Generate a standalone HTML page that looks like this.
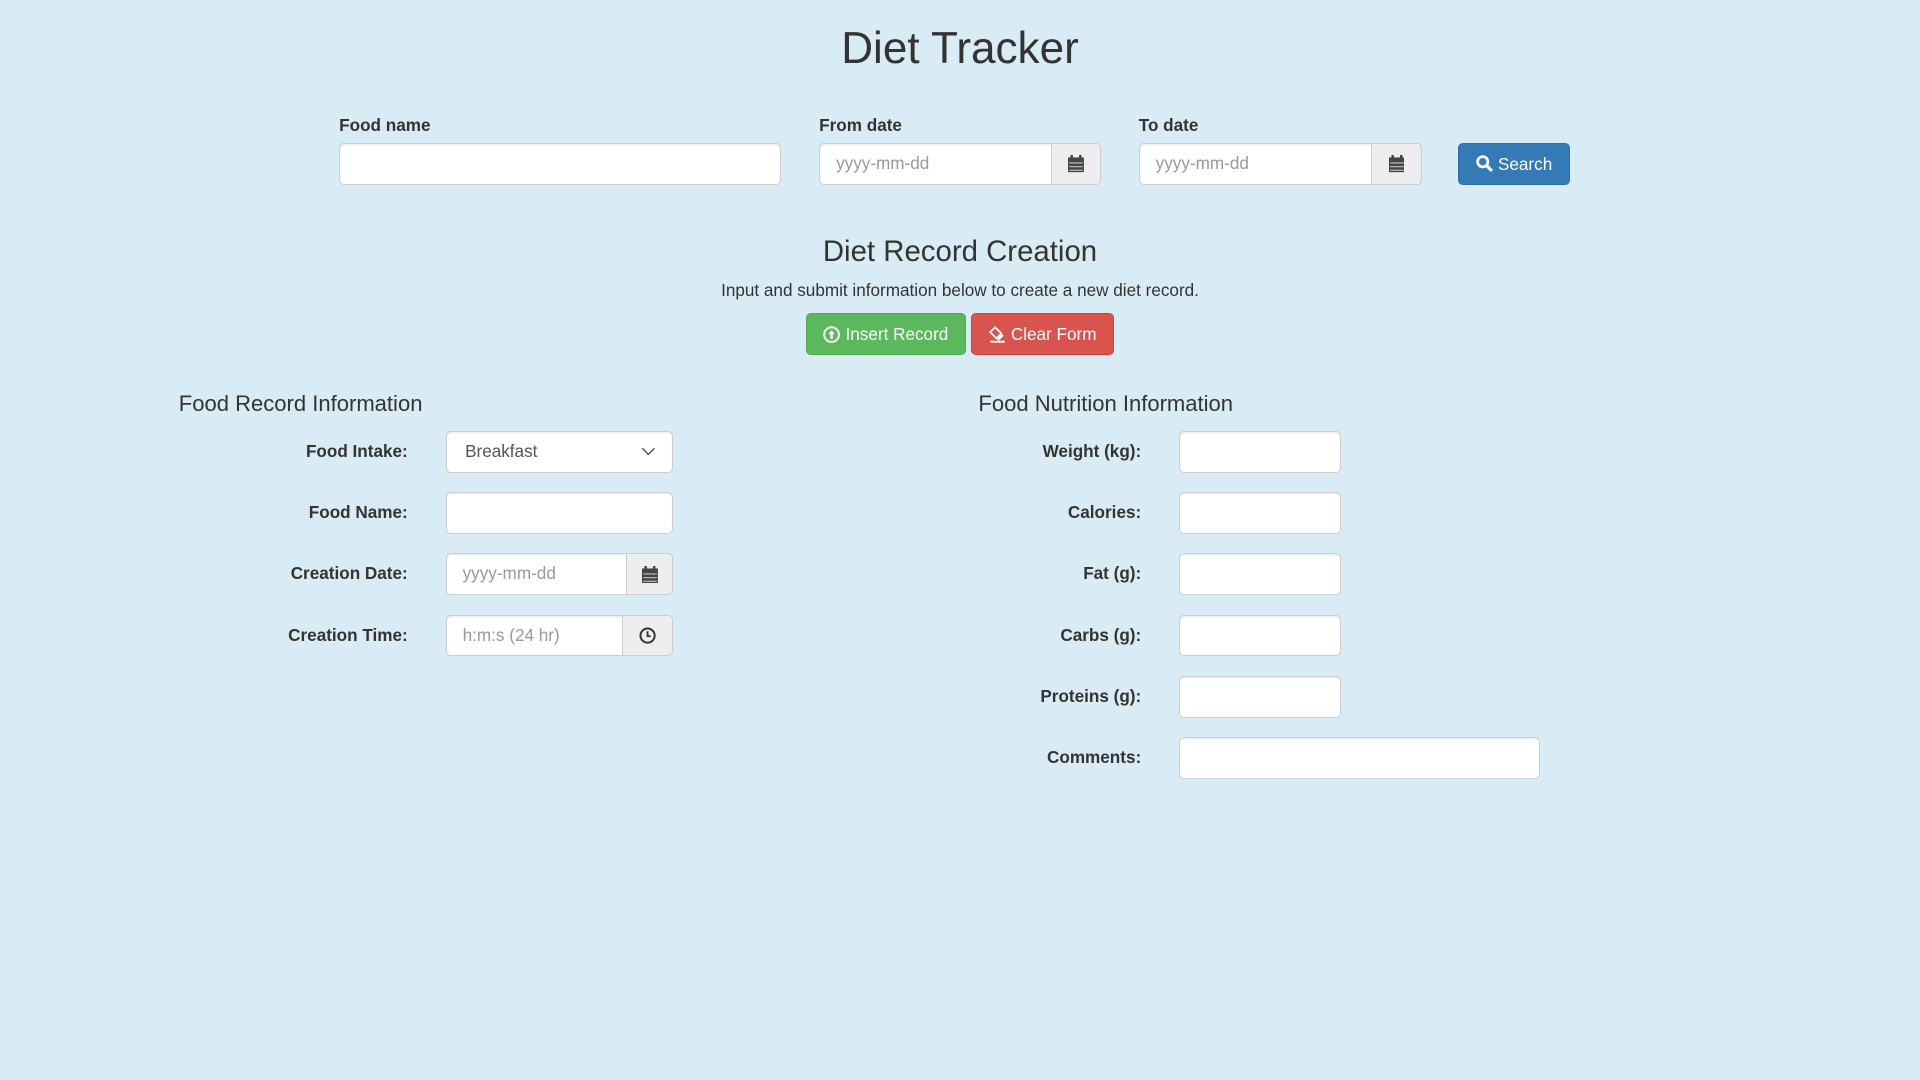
<!DOCTYPE html>
<html><head><meta charset="utf-8">
<style>
html,body{margin:0;padding:0;background:#d9ecf5;}
body{width:1568px;height:882px;zoom:1.22449;position:relative;overflow:hidden;font-family:"Liberation Sans",Arial,sans-serif;color:#333;font-size:14px;}
.a{position:absolute;}
.lbl{font-weight:bold;font-size:14px;}
.inp{position:absolute;box-sizing:border-box;height:34px;background:#fff;border:1px solid #ccc;border-radius:4px;box-shadow:inset 0 1px 1px rgba(0,0,0,.075);color:#999;font-size:14px;line-height:32px;padding-left:13px;}
.addon{position:absolute;box-sizing:border-box;height:34px;background:#eee;border:1px solid #ccc;border-radius:0 4px 4px 0;display:flex;align-items:center;justify-content:center;}
.grp{border-radius:4px 0 0 4px;border-right:none;}
.btn{position:absolute;box-sizing:border-box;height:34px;border-radius:4px;color:#fff;font-size:14px;display:flex;align-items:center;justify-content:center;gap:4px;}
.rl{position:absolute;width:200px;text-align:right;font-weight:bold;line-height:34px;}
h{display:block}
</style></head><body>
<div class="a" style="left:0;width:1568px;top:17px;text-align:center;font-size:36px;line-height:46px;">Diet Tracker</div>

<div class="a lbl" style="left:277px;top:94px;">Food name</div>
<div class="a lbl" style="left:669px;top:94px;">From date</div>
<div class="a lbl" style="left:930px;top:94px;">To date</div>

<div class="inp" style="left:277px;top:117px;width:361px;"></div>
<div class="inp grp" style="left:669px;top:117px;width:190px;">yyyy-mm-dd</div>
<div class="addon" style="left:858px;top:117px;width:41px;"><svg width="13" height="14" viewBox="0 0 13 14"><rect x="0" y="2" width="13" height="12" fill="#444"/><rect x="2" y="0" width="2" height="3" fill="#444"/><rect x="9" y="0" width="2" height="3" fill="#444"/><g fill="#bbb"><rect x="1" y="6" width="11" height="1"/><rect x="1" y="9" width="11" height="1"/><rect x="1" y="12" width="11" height="1"/></g></svg></div>
<div class="inp grp" style="left:930px;top:117px;width:191px;">yyyy-mm-dd</div>
<div class="addon" style="left:1120px;top:117px;width:41px;"><svg width="13" height="14" viewBox="0 0 13 14"><rect x="0" y="2" width="13" height="12" fill="#444"/><rect x="2" y="0" width="2" height="3" fill="#444"/><rect x="9" y="0" width="2" height="3" fill="#444"/><g fill="#bbb"><rect x="1" y="6" width="11" height="1"/><rect x="1" y="9" width="11" height="1"/><rect x="1" y="12" width="11" height="1"/></g></svg></div>
<div class="btn" style="left:1191px;top:117px;width:91px;background:#337ab7;border:1px solid #2e6da4;"><svg width="14" height="14" viewBox="0 0 14 14"><circle cx="5.5" cy="5.5" r="4.2" fill="none" stroke="#fff" stroke-width="2.2"/><path d="M8.5 8.5L13 13" stroke="#fff" stroke-width="2.6"/></svg>Search</div>

<div class="a" style="left:0;width:1568px;top:191px;text-align:center;font-size:24px;line-height:30px;">Diet Record Creation</div>
<div class="a" style="left:0;width:1568px;top:229px;text-align:center;font-size:14px;">Input and submit information below to create a new diet record.</div>
<div class="btn" style="left:658px;top:256px;width:131px;background:#5cb85c;border:1px solid #4cae4c;"><svg width="14" height="14" viewBox="0 0 14 14"><circle cx="7" cy="7" r="6" fill="none" stroke="#fff" stroke-width="1.6"/><path d="M7 3.5L4.3 6.6H6V10.5H8V6.6H9.7Z" fill="#fff"/></svg>Insert Record</div>
<div class="btn" style="left:793px;top:256px;width:117px;background:#d9534f;border:1px solid #d43f3a;"><svg width="14" height="14" viewBox="0 0 14 14"><path d="M5 1L10 6L6 10L1 5Z" fill="none" stroke="#fff" stroke-width="1.4"/><path d="M6 10L10 6L12 8L8 12Z" fill="#fff"/><rect x="1" y="12" width="12" height="1.6" fill="#fff"/></svg>Clear Form</div>

<div class="a" style="left:146px;top:319px;font-size:18px;line-height:22px;">Food Record Information</div>
<div class="a" style="left:799px;top:319px;font-size:18px;line-height:22px;">Food Nutrition Information</div>

<div class="rl" style="left:133px;top:352px;">Food Intake:</div>
<div class="inp" style="left:364px;top:352px;width:186px;color:#555;padding-left:15px;">Breakfast<svg style="position:absolute;right:14px;top:12px" width="12" height="8" viewBox="0 0 12 8"><path d="M1 1L6 6L11 1" fill="none" stroke="#555" stroke-width="1.2"/></svg></div>
<div class="rl" style="left:133px;top:402px;">Food Name:</div>
<div class="inp" style="left:364px;top:402px;width:186px;"></div>
<div class="rl" style="left:133px;top:452px;">Creation Date:</div>
<div class="inp grp" style="left:364px;top:452px;width:148px;">yyyy-mm-dd</div>
<div class="addon" style="left:511px;top:452px;width:39px;"><svg width="13" height="14" viewBox="0 0 13 14"><rect x="0" y="2" width="13" height="12" fill="#444"/><rect x="2" y="0" width="2" height="3" fill="#444"/><rect x="9" y="0" width="2" height="3" fill="#444"/><g fill="#bbb"><rect x="1" y="6" width="11" height="1"/><rect x="1" y="9" width="11" height="1"/><rect x="1" y="12" width="11" height="1"/></g></svg></div>
<div class="rl" style="left:133px;top:502px;">Creation Time:</div>
<div class="inp grp" style="left:364px;top:502px;width:145px;">h:m:s (24 hr)</div>
<div class="addon" style="left:508px;top:502px;width:42px;"><svg width="14" height="14" viewBox="0 0 14 14"><circle cx="7" cy="7" r="5.8" fill="none" stroke="#333" stroke-width="1.6"/><path d="M7 3.5V7.5H9.5" fill="none" stroke="#333" stroke-width="1.5"/></svg></div>

<div class="rl" style="left:732px;top:352px;">Weight (kg):</div>
<div class="inp" style="left:963px;top:352px;width:132px;"></div>
<div class="rl" style="left:732px;top:402px;">Calories:</div>
<div class="inp" style="left:963px;top:402px;width:132px;"></div>
<div class="rl" style="left:732px;top:452px;">Fat (g):</div>
<div class="inp" style="left:963px;top:452px;width:132px;"></div>
<div class="rl" style="left:732px;top:502px;">Carbs (g):</div>
<div class="inp" style="left:963px;top:502px;width:132px;"></div>
<div class="rl" style="left:732px;top:552px;">Proteins (g):</div>
<div class="inp" style="left:963px;top:552px;width:132px;"></div>
<div class="rl" style="left:732px;top:602px;">Comments:</div>
<div class="inp" style="left:963px;top:602px;width:295px;"></div>
</body></html>
